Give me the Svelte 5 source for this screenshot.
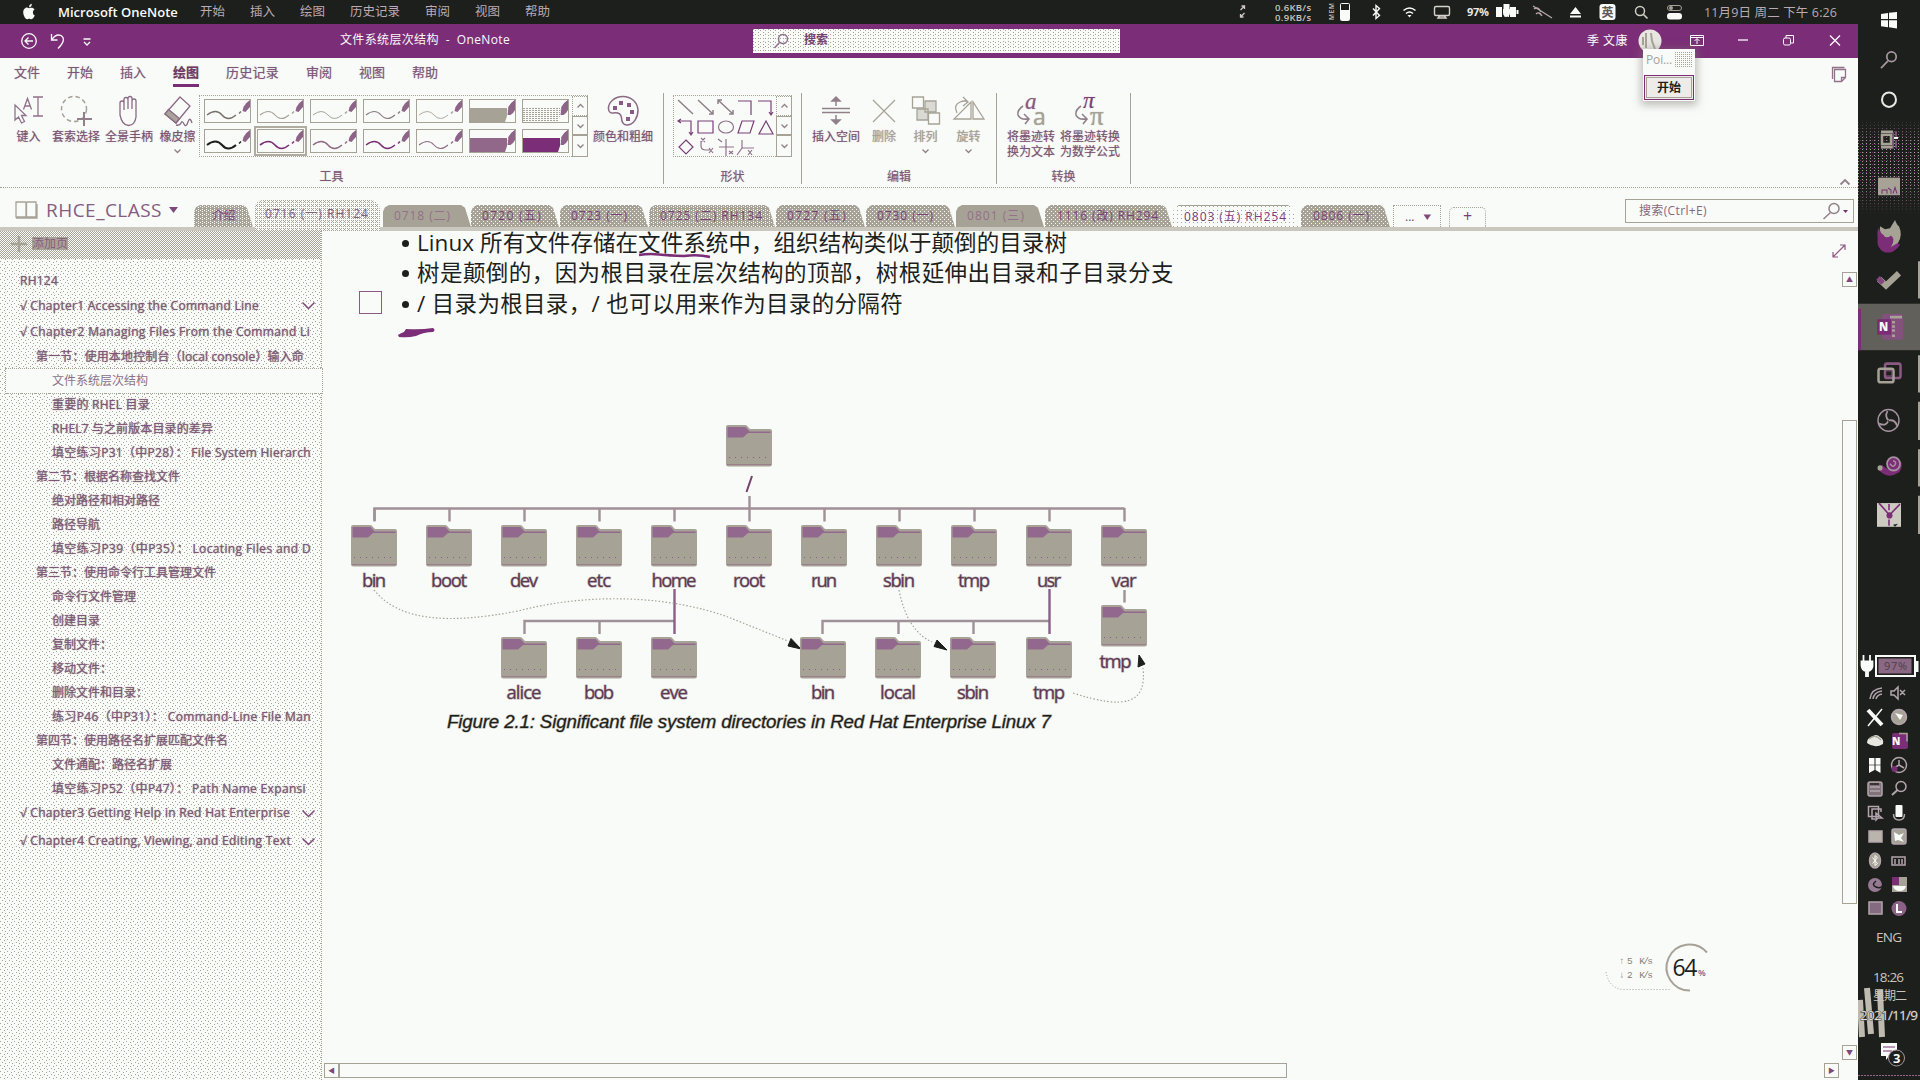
<script>
  // Spreads a label's letter spacing so that it fills the given width.
  function fit(node, width) {
    const natural = node.getBoundingClientRect().width;
    const count = [...node.textContent].length;
    if (count && width) node.style.letterSpacing = (width - natural) / count + 'px';
  }

  const menus = [['开始', 25], ['插入', 25], ['绘图', 25], ['历史记录', 50], ['审阅', 25], ['视图', 25], ['帮助', 25]];
  const ribbonTabs = [['文件', 26], ['开始', 26], ['插入', 26], ['绘图', 26], ['历史记录', 53], ['审阅', 26], ['视图', 26], ['帮助', 26]];

  const sections = [
    { t: '介绍', w: 59, tw: 23, pad: 18, gap: 0, k: 'mid' },
    { t: '0716 (一) RH124', w: 125, tw: 104, pad: 10, gap: 2, k: 'active' },
    { t: '0718 (二)', w: 88, tw: 57, pad: 11, gap: 3, k: 'solid' },
    { t: '0720 (五)', w: 88, tw: 60, pad: 11, gap: 0, k: 'dense' },
    { t: '0723 (一)', w: 88, tw: 57, pad: 11, gap: 1, k: 'dense' },
    { t: '0725 (二) RH134', w: 126, tw: 103, pad: 11, gap: 1, k: 'mid' },
    { t: '0727 (五)', w: 89, tw: 60, pad: 11, gap: 1, k: 'dense' },
    { t: '0730 (一)', w: 89, tw: 57, pad: 11, gap: 1, k: 'dense' },
    { t: '0801 (三)', w: 88, tw: 58, pad: 11, gap: 1, k: 'solid' },
    { t: '1116 (改) RH294', w: 127, tw: 102, pad: 12, gap: 1, k: 'dense' },
    { t: '0803 (五) RH254', w: 125, tw: 103, pad: 11, gap: 1, k: 'pale' },
    { t: '0806 (一)', w: 89, tw: 57, pad: 12, gap: 3, k: 'dense' }
  ];

  const pages = [
    { t: 'RH124', l: 0, w: 38, h: 22 },
    { t: '√ Chapter1 Accessing the Command Line', l: 0, w: 239, h: 27, c: true },
    { t: '√ Chapter2 Managing Files From the Command Li', l: 0, w: 290, h: 26 },
    { t: '第一节：使用本地控制台（local console）输入命', l: 1, w: 268 },
    { t: '文件系统层次结构', l: 2, w: 96, sel: true },
    { t: '重要的 RHEL 目录', l: 2, w: 98 },
    { t: 'RHEL7 与之前版本目录的差异', l: 2, w: 161 },
    { t: '填空练习P31（中P28）： File System Hierarch', l: 2, w: 259 },
    { t: '第二节：根据名称查找文件', l: 1, w: 144 },
    { t: '绝对路径和相对路径', l: 2, w: 108 },
    { t: '路径导航', l: 2, w: 48 },
    { t: '填空练习P39（中P35）： Locating Files and D', l: 2, w: 259 },
    { t: '第三节：使用命令行工具管理文件', l: 1, w: 180 },
    { t: '命令行文件管理', l: 2, w: 84 },
    { t: '创建目录', l: 2, w: 48 },
    { t: '复制文件：', l: 2, w: 60 },
    { t: '移动文件：', l: 2, w: 60 },
    { t: '删除文件和目录：', l: 2, w: 96 },
    { t: '练习P46（中P31）： Command-Line File Man', l: 2, w: 259 },
    { t: '第四节：使用路径名扩展匹配文件名', l: 1, w: 192 },
    { t: '文件通配：路径名扩展', l: 2, w: 120 },
    { t: '填空练习P52（中P47）： Path Name Expansi', l: 2, w: 254 },
    { t: '√ Chapter3 Getting Help in Red Hat Enterprise', l: 0, w: 270, h: 24, c: true },
    { t: '√ Chapter4 Creating, Viewing, and Editing Text', l: 0, w: 271, h: 32, c: true }
  ];

  const folders = [
    [726, 425, ''],
    [351, 525, 'bin', 24], [426, 525, 'boot', 36], [501, 525, 'dev', 28], [576, 525, 'etc', 24],
    [651, 525, 'home', 45], [726, 525, 'root', 32], [801, 525, 'run', 26], [876, 525, 'sbin', 32],
    [951, 525, 'tmp', 32], [1026, 525, 'usr', 24], [1101, 525, 'var', 25],
    [501, 637, 'alice', 35], [576, 637, 'bob', 30], [651, 637, 'eve', 28],
    [800, 637, 'bin', 24], [875, 637, 'local', 36], [950, 637, 'sbin', 32], [1026, 637, 'tmp', 32],
    [1101, 605, 'tmp', 32]
  ];
  const row = [374.5, 449.5, 524.5, 599.5, 674.5, 824.5, 899.5, 974.5, 1049.5, 1124.5];

  const pens = [
    ['#777068', 1.3], ['#a7a296', 1.1], ['#a7a296', 1], ['#8c7a85', 1.1], ['#a7a296', 0.9], ['fill', '#a7a296'], ['dots', '#a7a296'],
    ['#1c1f1b', 2], ['#7b2e77', 1.6, true], ['#91677f', 1.3], ['#7b2e77', 1.4], ['#8f6f84', 1.1], ['fill', '#91688a'], ['fill', '#7b2e77']
  ];
</script>

{#snippet chev(dir)}
  <svg class="chev" width="9" height="6" viewBox="0 0 9 6"><path d={dir === 'up' ? 'M1.5 4.5l3-3 3 3' : 'M1.5 1.5l3 3 3-3'} fill="none" stroke="#91808a" stroke-width="1.3" /></svg>
{/snippet}

<div class="screen">
  <div class="desk">
    <div class="macbar">
      <svg class="apple" width="14" height="18" viewBox="0 0 14 18"><path d="M9.8.8C8 1.200 7 2.500 7.100 4.300 8.800 4.200 9.900 2.800 9.800.8zM7 5.200C5.800 4.700 4.700 4.300 3.500 4.900 1.300 6 .9 8.500 1.400 11c.5 2.500 2 5.200 3.700 5.300.8 0 1.200-.5 2.100-.5s1.300.5 2.200.5c1.500-.1 2.900-2.300 3.400-4-2.500-1.100-2.400-4.700-.2-5.900C11.500 4.800 9.400 4.200 7 5.200z" fill="#f9fbf9" /></svg>
      <b class="app" use:fit={118}>Microsoft OneNote</b>
      {#each menus as [t, w]}<span class="menu"><i use:fit={w}>{t}</i></span>{/each}
      <svg class="status" width="618" height="24" viewBox="1230 0 618 24" fill="none" stroke="#f9fbf9">
        <path d="M1240.500 10l4-4m-3 0h3v3M1244.500 13l-4 4m0-3v3h3" stroke="#d0c6cc" stroke-width="1.300" />
        <g fill="#c9c6bd" stroke="none" font-size="9.500" font-weight="600">
          <text x="1275" y="11" textLength="36">0.6KB/s</text>
          <text x="1275" y="21" textLength="36">0.9KB/s</text>
          <text transform="translate(1333.500 20) rotate(-90)" font-size="6.500" textLength="17">MEM</text>
        </g>
        <rect x="1340.500" y="3.500" width="9" height="17" rx="1" /><rect x="1341" y="10" width="8" height="10" fill="#f9fbf9" stroke="none" />
        <path d="M1373 8.500l6.500 7-3.500 3v-13l3.500 3-6.500 7" stroke-width="1.400" />
        <path d="M1403.500 10.500q6-5 12 0M1406 13.500q3.500-3 7 0" stroke-width="1.600" /><path d="M1407.500 15h4l-2 2.500z" fill="#f9fbf9" stroke="none" />
        <path d="M1436 15.500q-1.500 0-1.500-1.500V8q0-1.500 1.500-1.500h12q1.500 0 1.500 1.500v6q0 1.500-1.500 1.500zM1438 18h8l-1.500-2h-5z" stroke="#d5d2ca" stroke-width="1.400" />
        <text x="1467" y="16" fill="#e8e8e4" stroke="none" font-size="11" font-weight="700" textLength="22">97%</text>
        <path d="M1496 7h6v10h-6zM1510 7h6v10h-6zM1516.500 10h2v4h-2zM1503.500 4v5h6V4M1503 9h7v4q0 3-3.500 4-3.500-1-3.500-4z" fill="#f9fbf9" stroke="none" />
        <path d="M1505 5v12M1508.500 5v12" />
        <path d="M1533 6l19 12M1534 9q4-3 7 3M1536 14q3-3 6 2" stroke="#b6a5a9" stroke-width="1.400" />
        <path d="M1575.500 7l5.500 7h-11zM1570 15.500h11v2h-11z" fill="#f9fbf9" stroke="none" />
        <rect x="1599.500" y="4" width="16" height="16" rx="3" fill="#f9fbf9" stroke="none" /><text x="1601.500" y="16.500" font-size="12" font-weight="700" fill="#5f5a54" stroke="none">英</text>
        <circle cx="1640" cy="11" r="4.500" stroke="#d0cdc4" stroke-width="1.500" /><path d="M1643.500 14.500l4 4" stroke="#d0cdc4" stroke-width="1.700" />
        <rect x="1667.500" y="5.500" width="14" height="5" rx="2.500" stroke="#a7a296" /><rect x="1667" y="13" width="15" height="6.500" rx="3" fill="#f9fbf9" stroke="none" /><circle cx="1671" cy="8" r="2" fill="#a7a296" stroke="none" />
        <text x="1704" y="16.500" font-size="12.500" fill="#b9aab1" stroke="none" textLength="133">11月9日 周二 下午 6:26</text>
      </svg>
    </div>

    <div class="titlebar">
      <svg width="75" height="24" viewBox="20 29 75 24" fill="none" stroke="#f9fbf9" stroke-width="1.300"><circle cx="29" cy="41" r="7.300" /><path d="M33 41h-8m3.500-3.500L25 41l3.500 3.500M51.500 34v6h6M52 39.500q4-6 9-4 6 4-3 13M83.500 39h7" /><path d="M84 42l3 3 3-3" /></svg>
      <div class="doc"><i use:fit={170}>文件系统层次结构&nbsp; - &nbsp;OneNote</i></div>
      <div class="find">
        <svg width="16" height="16" viewBox="0 0 16 16" fill="none" stroke="#91728a" stroke-width="1.500"><circle cx="10" cy="6" r="4.500" /><path d="M6.500 9.500L1.500 15" /></svg>
        <i use:fit={24}>搜索</i>
      </div>
      <div class="user"><i use:fit={41}>季 文康</i></div>
      <svg class="win" width="205" height="24" viewBox="1637 29 205 24" fill="none" stroke="#f9fbf9"><circle cx="1650" cy="41" r="11.500" fill="#e7e6e1" stroke="none" /><path d="M1646 33v15M1651 33l1 8 3 8M1643 37v8" stroke="#a7a296" stroke-width="2" /><path d="M1690.500 35.500h13v10h-13zM1690.500 37.500h13M1697 44v-5m-2.500 2l2.500-2.500 2.500 2.500" /><path d="M1738 40h10" stroke-width="1.300" /><rect x="1783.500" y="38" width="7" height="7" rx="1.500" /><path d="M1786 38v-2.500h7.500V43h-3" /><path d="M1830 35.500l10 10M1840 35.500l-10 10" stroke-width="1.300" /></svg>
    </div>

    <div class="ribbon">
      <div class="rtabs">
        {#each ribbonTabs as [t, w], n}<span class:on={n === 3}><i use:fit={w}>{t}</i></span>{/each}
        <svg class="note" width="18" height="19" viewBox="0 0 18 19" fill="none" stroke="#91728a" stroke-width="1.300"><path d="M2.500 14V2.500h12M4.500 4.500h11v8l-4 4h-7zM11.500 16v-3.500h4" /></svg>
      </div>
      <div class="groups">
        <section class="g1">
          <div class="tools">
            <div class="tool w43"><svg width="32" height="32" viewBox="0 0 32 32" fill="none" stroke="#91728a" stroke-width="1.300"><path d="M2 10v15l3.500-3 3 6 3-1.500-3-6H13zM10.500 14.500l4-11 4 11M12 11h5M20 2h10M25 2v19M20 21h10" /></svg><i use:fit={24}>键入</i></div>
            <div class="tool w52"><svg width="32" height="32" viewBox="0 0 32 32" fill="none" stroke="#a7a296" stroke-width="1.500"><circle cx="14" cy="14" r="12.500" stroke-dasharray="4.500 3" /><path d="M24 17v14M17 24h15" stroke="#91808a" stroke-width="2" /></svg><i use:fit={48}>套索选择</i></div>
            <div class="tool w54"><svg width="32" height="32" viewBox="0 0 32 32" fill="none" stroke="#8b6a84" stroke-width="1.300"><path d="M7 18V8q0-2 2-2t2 2v7V4.500q0-2 2-2t2 2V14 3.500q0-2 2-2t2 2V14 6q0-2 2-2t2 2v16q-1 8-7.500 8.500Q9 30 7 20z" /></svg><i use:fit={48}>全景手柄</i></div>
            <div class="tool w42"><svg width="32" height="32" viewBox="0 0 32 32" fill="none" stroke="#8b6a84" stroke-width="1.300"><path d="M18 2l10 9-14 17L3 19z" /><path d="M3 19l11 9 3.500-4.500L6.500 14.500z" fill="#aaa39a" /><path d="M14 30q4 1 5-2t3 1 4-2 4 1" /></svg><i use:fit={36}>橡皮擦</i>{@render chev('down')}</div>
            <div class="gallery">
              <div class="pens">
                {#each pens as p}
                  <svg class:picked={p[2] === true} width="47" height="24" viewBox="0 0 47 24">
                    <rect x=".5" y=".5" width="46" height="23" fill="#f9fbf9" stroke="#a7a296" />
                    {#if p[0] === 'fill'}<rect x="1" y="9" width="37" height="14" fill={p[1]} />{:else if p[0] === 'dots'}<path d="M1 9.500h37M1 11.500h37M1 13.500h37M1 15.500h37M1 17.500h37M1 19.500h37M1 21.500h37" stroke={p[1]} stroke-dasharray="2 1" />{:else}<path d="M3 16q9-7 15 0t14 0" fill="none" stroke={p[0]} stroke-width={p[1]} /><path d="M35 14.500l2-2" stroke={p[0]} stroke-width="1.500" />{/if}
                    <path d="M38.500 12l1-4q3-5 6.500-7v7q-2 2-4.500 5z" fill="#8d6488" />
                    {#if p[0] === 'fill' || p[0] === 'dots'}<path d="M38 17l1-8 5 3v4l-3 1v6h-5z" fill="#f9fbf9" /><path d="M38.500 16l1-8q3-5 6.500-7v10q-2 4-4.500 5z" fill="#8d6488" />{/if}
                  </svg>
                {/each}
              </div>
              <div class="scroll"><span>{@render chev('up')}</span><span>{@render chev('down')}</span><span>{@render chev('down')}</span></div>
            </div>
            <div class="tool w70"><svg width="32" height="32" viewBox="0 0 32 32" fill="none" stroke="#8b6a84" stroke-width="1.500"><path d="M16 1.500C7 1.500 1 8 1.500 14q.5 4.500 5 4 7-1 8 4.500 0 7 5 7.500C27 30 31 22 31 15 30.500 7 24 1.500 16 1.500z" /><g fill="#8b5a84" stroke="none"><rect x="6" y="11" width="4" height="4" /><rect x="12" y="6" width="4" height="4" /><rect x="20" y="8" width="4" height="4" /><rect x="23" y="15" width="4" height="4" /><rect x="19" y="22" width="4" height="4" /></g></svg><i use:fit={60}>颜色和粗细</i></div>
          </div>
          <footer>工具</footer>
        </section>

        <section class="g2">
          <div class="tools">
            <div class="gallery shapes">
              <svg width="102" height="61" viewBox="0 0 102 61" fill="none" stroke="#7b3f77" stroke-width="1.200">
                <g stroke="#91808a" stroke-width="1.500"><path d="M4 4l15 14M24 4l15 14m0-4v4h-4M44 4l15 14m0-4v4h-4M44 8V4h4" /></g>
                <path d="M64 5h13v14M84 5h13v14m-2-3l2 3 2-3M5 25h12v14m-2-3l2 3 2-3M7 23l-3 2 3 2M24 25h15v12H24z" />
                <ellipse cx="52" cy="31" rx="7.500" ry="6" stroke="#91728a" /><path d="M68 25h12l-4 12H64zM92 25l7 13H85zM12 44l7 7-7 7-7-7z" />
                <path d="M27 45v5q0 4 5 4h6M27 42l4 4M31 42l-4 4M35 52l4 5M39 52l-4 5M52 43v17M45 51h15M44 43l4 3M55 55l4 3M59 55l-4 3M68 44v8l-5 7M68 52h12M74 54l4 5M78 54l-4 5" stroke="#91728a" />
              </svg>
              <div class="scroll"><span>{@render chev('up')}</span><span>{@render chev('down')}</span><span>{@render chev('down')}</span></div>
            </div>
          </div>
          <footer>形状</footer>
        </section>

        <section class="g3">
          <div class="tools">
            <div class="tool w68"><svg width="32" height="32" viewBox="0 0 32 32" fill="none" stroke="#91808a" stroke-width="1.500"><path d="M2 13.500h28M2 17.500h28M16 3v8M16 20v8" /><path d="M12 6l4-4 4 4zM12 25l4 4 4-4z" fill="#91808a" /></svg><i use:fit={48}>插入空间</i></div>
            <div class="tool w28 off"><svg width="28" height="32" viewBox="0 0 28 32" fill="none" stroke="#a7a296" stroke-width="1.200"><path d="M3 5l22 22M25 5L3 27" /></svg><i use:fit={24}>删除</i></div>
            <div class="tool w55 off"><svg width="32" height="32" viewBox="0 0 32 32" fill="#dbd9d3" stroke="#a7a296" stroke-width="1.300"><path d="M15 6h11v11H15zM7 14h11v11H7z" /><path d="M2.500 2h11v11h-11zM18.500 18h11v11h-11z" fill="#f9fbf9" /></svg><i use:fit={24}>排列</i>{@render chev('down')}</div>
            <div class="tool w31 off"><svg width="32" height="32" viewBox="0 0 32 32" fill="none" stroke="#a7a296" stroke-width="1.300"><path d="M1 24h17V7zM20 24h11L20 7zM4 18q-4-8 3-11 5-2 8 0m-5-5l5 5-5 4" /></svg><i use:fit={24}>旋转</i>{@render chev('down')}</div>
          </div>
          <footer>编辑</footer>
        </section>

        <section class="g4">
          <div class="tools">
            <div class="tool w62"><svg class="serif" width="32" height="32" viewBox="0 0 32 32" fill="none" stroke="#91808a" stroke-width="1.600"><path d="M8 11q-6 4-5 9 2 5 10 4m-4-5l5 5-4 5" /><text x="10" y="13.500" font-size="23" fill="#8b5a84" stroke="none" font-style="italic">a</text><text x="18" y="30" font-size="23" fill="#a7a296" stroke="none" font-family="Open Sans">a</text></svg><i use:fit={48}>将墨迹转</i><i use:fit={48}>换为文本</i></div>
            <div class="tool w56"><svg class="serif" width="32" height="32" viewBox="0 0 32 32" fill="none" stroke="#91808a" stroke-width="1.600"><path d="M7 11q-6 4-5 9 2 5 10 4m-4-5l5 5-4 5" /><text x="9" y="13" font-size="23" fill="#7b3f77" stroke="none" font-style="italic">π</text><text x="16" y="30" font-size="27" fill="#a7a296" stroke="none">π</text></svg><i use:fit={60}>将墨迹转换</i><i use:fit={60}>为数学公式</i></div>
          </div>
          <footer>转换</footer>
        </section>
        <svg class="fold" width="12" height="8" viewBox="0 0 12 8" fill="none" stroke="#91808a" stroke-width="1.800"><path d="M1.500 6.500l4.500-4.500 4.500 4.500" /></svg>
      </div>
    </div>

    <div class="strip">
      <div class="book">
        <svg width="24" height="20" viewBox="0 0 24 20" fill="none" stroke="#a7a296" stroke-width="1.300"><path d="M1 2h10v15H1zM12 2h9v15h-9M1 18h21V4M11.500 2v15" /></svg>
        <i use:fit={116}>RHCE_CLASS</i>
        <svg width="10" height="8" viewBox="0 0 10 8"><path d="M0 1h9L4.500 7z" fill="#7f4a79" /></svg>
      </div>
      {#each sections as s}
        <div class="sec {s.k}" style:width="{s.w}px" style:margin-left="{s.gap}px" style:padding-left="{s.pad}px"><i use:fit={s.tw}>{s.t}</i></div>
      {/each}
      <div class="sec more"><span>...</span><svg width="9" height="6" viewBox="0 0 9 6"><path d="M.5.500h7.500L4.300 6z" fill="#7f4a79" /></svg></div>
      <div class="sec plus">+</div>
      <div class="lookup"><i use:fit={68}>搜索(Ctrl+E)</i>
        <svg width="32" height="18" viewBox="0 0 32 18" fill="none" stroke="#91808a" stroke-width="1.500"><circle cx="13" cy="6.500" r="5" /><path d="M9.500 10.500L2.500 17" /><path d="M22 8h5l-2.500 3z" fill="#7b2e77" stroke="none" /></svg>
      </div>
    </div>

    <div class="work">
      <aside>
        <div class="add"><svg width="16" height="16" viewBox="0 0 16 16"><path d="M8 0v16M0 8h16" stroke="#a7a296" stroke-width="2.500" /></svg><i use:fit={36}>添加页</i></div>
        <div class="pages">
          {#each pages as p}
            <div class="page l{p.l}" class:sel={p.sel} style:height="{p.h ?? 24}px"><i use:fit={p.w}>{p.t}</i>
              {#if p.c}<svg width="15" height="9" viewBox="0 0 15 9"><path d="M1.500 1.500l6 6 6-6" fill="none" stroke="#7f4a79" stroke-width="1.500" /></svg>{/if}
            </div>
          {/each}
        </div>
      </aside>

      <main>
        <div class="paper">
          <div class="lines">
            <p><i use:fit={650}>Linux 所有文件存储在文件系统中，组织结构类似于颠倒的目录树</i></p>
            <p><i use:fit={757}>树是颠倒的，因为根目录在层次结构的顶部，树根延伸出目录和子目录分支</i></p>
            <p class="todo"><i use:fit={486}>/ 目录为根目录，/ 也可以用来作为目录的分隔符</i></p>
          </div>
          <svg class="canvas" width="1536" height="829" viewBox="322 231 1536 829">
            <path d="M639 255q10-1.500 20-.5t25 1.500q14-2 26 1" fill="none" stroke="#7b2e77" stroke-width="2.500" />
            <path d="M398 335q3-2 6-3l2-3q14 1 27-1 3 2 0 4-9 0-17 4-8 2-17 1z" fill="#7b2e77" />
            <g fill="none" stroke="#a09097" stroke-width="2.400">
              <path d="M374.500 521v-12.500h750" />
              {#each row as x}<path d="M{x} 508v13.500" />{/each}
              <path d="M749.500 496v25.500M524.500 634v-13h150M599.500 621v13M822.500 634v-13h227M898.500 621v13M973.500 621v13M1124.500 590v12.500" />
              <path d="M674.500 589v45M1049.500 589v45" stroke="#8c5f88" />
              <path d="M752 476l-5.500 16" stroke="#74436f" stroke-width="2" />
            </g>
            <g fill="none" stroke="#a7a296" stroke-width="1.200" stroke-dasharray="1.500 2">
              <path d="M374 590C400 622 450 624 518 611 590 592 670 596 728 617L788 641" />
              <path d="M899 590C904 615 914 634 932 642" />
              <path d="M1073 693C1125 710 1147 704 1143 668" />
            </g>
            <path d="M791 638.500l10 10.500-13-3zM937 640l10 10-13-3.500zM1139 655l6 9-7 3z" fill="#1c1f1b" stroke="#1c1f1b" />
            {#each folders as [x, y, name, w]}
              <g transform="translate({x} {y})">
                <path d="M0 8V2q0-2 2-2h17q2 0 3 2l2 2h20q2 0 2 2v33q0 2.500-2.500 2.500H2.500Q0 41.500 0 39z" fill="#a7a296" />
                <path d="M1.500 2h18l4 4.500h21v1.500H22l-5 4.500H1.500z" fill="#93688e" />
                <path d="M1.500 39.500h43" stroke="#8c5a86" stroke-dasharray="1 1" /><path d="M3 32.500h41" stroke="#8c5a86" stroke-dasharray="1 5" />
              </g>
              {#if name}<text class="dir" x={x + 23 - w / 2 - (y === 605 ? 8.500 : 0)} y={y + (y === 605 ? 63 : 62)} textLength={w}>{name}</text>{/if}
            {/each}
            <text class="caption" x="447" y="728" textLength="604">Figure 2.1: Significant file system directories in Red Hat Enterprise Linux 7</text>
            <g class="net">
              <path d="M1707 952.500A23 23 0 1 0 1690 990.500" fill="none" stroke="#a7a296" stroke-width="2" />
              <path d="M1606 972q3 17 18 17.500h46" fill="none" stroke="#a7a296" stroke-dasharray="1 2" />
              <text x="1672.500" y="976" font-size="23" fill="#1c1f1b" textLength="25">64</text><text x="1698" y="976" font-size="9" font-weight="600" fill="#8b5a84" textLength="8">%</text>
              <text class="mono" x="1619" y="964" textLength="34">↑ 5&nbsp; K/s</text><text class="mono" x="1619" y="978" textLength="34">↓ 2&nbsp; K/s</text>
            </g>
            <path d="M1833 257l12-12m-5 0h5v5M1838 257h-5v-5" fill="none" stroke="#8b5a84" stroke-width="1.200" />
          </svg>
          <div class="vbar"><b>▲</b><span></span><b>▼</b></div>
        </div>
        <div class="hbar"><b>◀</b><span></span><b>▶</b></div>
      </main>
    </div>

    <div class="pop"><div class="phead"><i use:fit={26}>Poi...</i><em></em></div><div class="pbtn">开始</div></div>
  </div>

  <div class="dock">
    <div class="glow"></div>
    <svg width="62" height="1080" viewBox="1858 0 62 1080" fill="none">
      <g transform="scale(1 1.033)">
        <path d="M1881 13.500l7-1v6h-7zM1889 12.300l8-.8v7h-8zM1881 19.500h7v7l-7-1zM1889 19.500h8v8l-8-1z" fill="#f9fbf9" />
        <g stroke="#a998a2" stroke-width="1.700"><circle cx="1891.500" cy="55" r="4.700" /><path d="M1888 59l-7 7" /></g>
        <circle cx="1889" cy="96.500" r="7" stroke="#e9e8e3" stroke-width="2" />
        <path d="M1881 127.500h12M1881 142.500h12M1882 130.500h9v9h-9z" stroke="#a7a296" stroke-width="2.500" /><path d="M1893 128v15M1896 127v5M1896 136v7" stroke="#8c6a88" stroke-width="1.500" /><path d="M1894 133.500h4" stroke="#f9fbf9" stroke-width="2" />
        <rect x="1878" y="172" width="22" height="17" fill="#a7a296" /><path d="M1882 187.500v-3.500h5v3.500M1888 182l3 2v3.500M1893 187.500l2-6 2 6" stroke="#7b2e77" />
        <path d="M1878 221q-2 10 2 17 6 6 12 5 7-2 8-7-6 2-9-1 5-2 2-10-6 6-10 1-3-2-5-5z" fill="#7b2e77" /><circle cx="1888" cy="234" r="10.500" fill="#7b2e77" />
        <path d="M1880 219l5 3 5-1 5-8q2 5 4 6 4 9-1 16l-7 4q5-7 0-11-5 4-8-1-4-2-3-8z" fill="#a7a296" />
        <path d="M1879 270l7 6.500 13-12" stroke="#a7a296" stroke-width="6" /><path d="M1878 269l5 5" stroke="#83457d" stroke-width="5" />
        <rect x="1858" y="294" width="62" height="45" fill="#62605a" /><path d="M1859.500 299v40" stroke="#7b2e77" stroke-width="3" />
        <rect x="1882" y="304" width="21" height="25" rx="2" fill="#84507e" /><path d="M1890 307h12M1892 312h3M1892 316h3M1892 320h3M1892 325h3" stroke="#a7a296" stroke-width="2.500" /><rect x="1877" y="309" width="14" height="15" fill="#7b2e77" />
        <text x="1879" y="320.500" font-size="11" font-weight="800" fill="#f9fbf9">N</text>
        <rect x="1885" y="352" width="15.500" height="14" rx="2" stroke="#8b5a84" stroke-width="2.500" /><rect x="1878.500" y="357" width="15" height="13" rx="2" stroke="#a7a296" stroke-width="2.500" /><rect x="1885" y="359" width="7" height="5" stroke="#8b5a84" />
        <g stroke="#a7929f" stroke-width="1.400"><circle cx="1888.500" cy="407" r="10.500" /><path d="M1888.500 407q-4-4-1-9M1889 407q6-1 8 5M1888 408q-2 5-9 2" stroke-width="1.800" /></g>
        <path d="M1880 452q8 9 17 3 5-8-4-9" stroke="#7b2e77" stroke-width="6" /><circle cx="1893.500" cy="449" r="6.500" stroke="#a7929f" stroke-width="1.800" fill="#7b2e77" /><path d="M1893 446q4 1 2 4t-5-1" stroke="#a7929f" stroke-width="1.500" /><circle cx="1880" cy="453" r="2.500" fill="#a7a296" />
        <rect x="1877" y="487" width="24" height="23" fill="#cdcac2" /><path d="M1879 487l10 11M1889 488v6M1889 503v6M1889 499l11-11" stroke="#7b2e77" stroke-width="1.600" /><circle cx="1889.500" cy="499" r="3" fill="#7b2e77" /><path d="M1893 508l5-1-3 3z" fill="#1c1f1b" />
        <path d="M1919 253v36M1919 344v36M1919 389v37M1919 435v36M1919 480v37" stroke="#a7a296" stroke-width="2" />
      </g>
      <path d="M1863.500 655v6M1870 655v6M1861.500 661.500h11v5q-1 4-4.500 4.500v5h-2v-5q-4-.5-4.500-5.500z" stroke="#f9fbf9" stroke-width="1.800" fill="#f9fbf9" />
      <rect x="1876" y="656" width="39" height="20" stroke="#f9fbf9" stroke-width="2" /><rect x="1878.500" y="658.500" width="33" height="15" fill="#8b6884" /><path d="M1917 661v11" stroke="#f9fbf9" stroke-width="3" />
      <text x="1884" y="670" font-size="11" fill="#4a4046" textLength="23">97%</text>
      <g stroke="#b3a5ad" stroke-width="1.500">
        <path d="M1870 699q1-10 12-11M1873 699q1-7 9-8M1876 699q1-4 6-5" /><path d="M1891 691h3l4-4v12l-4-4h-3zM1900 690l5 5M1905 690l-5 5" />
        <path d="M1868 710l14 15" stroke="#f9fbf9" stroke-width="4" /><path d="M1882 709l-14 17" stroke="#f9fbf9" />
        <circle cx="1899" cy="717" r="7.500" fill="#a7a296" /><path d="M1895 713l8 2-3 5z" fill="#f9fbf9" stroke="none" />
        <path d="M1867 743q0-5 5-6 4-4 8 0 4 2 3 7-8 5-16-1z" fill="#e8e7e1" stroke="none" /><path d="M1869 739q6-6 12 1" stroke="#a7a296" />
        <rect x="1892" y="733" width="16" height="16" rx="2" fill="#7b2e77" stroke="none" /><path d="M1899 733.500h8v8" stroke="#a7a296" /><text x="1892" y="745" fill="#f9fbf9" stroke="none" font-size="10" font-weight="800">N</text>
        <path d="M1869 758h5.500v12l-5.500 3zM1875.500 758h5v15l-5-3z" fill="#f9fbf9" stroke="none" /><path d="M1869 765h12" stroke="#1c1f1b" stroke-width=".6" /><circle cx="1899" cy="765" r="7.500" /><path d="M1899 765v-5M1899 765l5 3M1899 765l-5 3" /><circle cx="1894.500" cy="769" r="3" fill="#7b2e77" stroke="none" />
        <rect x="1868" y="782" width="14" height="14" rx="2" fill="#80737a" /><path d="M1870 784h9" stroke="#1c1f1b" /><path d="M1870 787h10M1870 791h10" /><circle cx="1901" cy="786.500" r="5" /><path d="M1897.500 790l-5.500 5" stroke-width="2" />
        <rect x="1868.500" y="806.500" width="10" height="10" /><path d="M1881 812v-3h-9v10h3M1876 813v7l2-2h4z" /><rect x="1895.500" y="805" width="7" height="12" rx="1" fill="#f9fbf9" stroke="none" /><path d="M1893.500 814q0 6 5.500 6t5.500-6" />
        <rect x="1869" y="831" width="13" height="11" fill="#b9b5ac" /><rect x="1892" y="829" width="14" height="15" rx="2" fill="#a7a296" /><path d="M1894 832l5 3 5-2-3 5 3 4-6-2-3 1z" fill="#f9fbf9" stroke="none" />
        <ellipse cx="1875" cy="860.500" rx="5.500" ry="7.500" fill="#a7a296" /><path d="M1872.500 857.500l5 6-2.500 2v-10l2.500 2-5 6" stroke="#f9fbf9" stroke-width="1" /><path d="M1892 857h13v8h-13zM1895 859v5M1899 859v5M1902 859v5" />
        <circle cx="1875" cy="885" r="7" fill="#967992" stroke="none" /><path d="M1876 881q-5 4 0 6t7-2" stroke="#1c1f1b" /><rect x="1892" y="877" width="15" height="15" fill="#a7a296" stroke="none" /><path d="M1899 877v8h-7v-8z" fill="#7b2e77" stroke="none" /><path d="M1893 886h13q-1 5-6.500 5t-6.500-5z" fill="#f9fbf9" stroke="none" />
        <rect x="1869" y="902" width="13" height="12" fill="#856b81" /><circle cx="1899" cy="908.500" r="7.500" fill="#8b6286" stroke="none" /><path d="M1897 904v8h5" stroke="#f9fbf9" stroke-width="2" />
      </g>
      <g fill="#c9c6bd" font-size="13.500">
        <text x="1876" y="942" textLength="26">ENG</text><text x="1873" y="982" textLength="31">18:26</text>
        <g stroke="#bfbbb1" stroke-width="6"><path d="M1860 1000l2 37M1867 988l4 46M1880 990l2 47" /></g>
        <text x="1873" y="1000" font-size="12" textLength="34">星期二</text><text class="date" x="1860" y="1019.500" textLength="58">2021/11/9</text>
      </g>
      <path d="M1881 1043h16v13h-8l-3 4v-4h-5z" fill="#f9fbf9" /><path d="M1883 1047h12M1883 1051h9" stroke="#7b2e77" /><circle cx="1896.500" cy="1058" r="8" fill="#1c1f1b" stroke="#a998a2" /><text x="1893" y="1063" font-size="13" font-weight="700" fill="#f9fbf9">3</text>
      <path d="M1858 1075.500h62" stroke="#94688e" stroke-dasharray="2 1" />
    </svg>
  </div>
</div>

<style>
  :global(body) { background: #f9fbf9; overflow: hidden; }
  .screen {
    --ink: #7b2e77; --gray: #a7a296; --paper: #f9fbf9; --night: #1c1f1b;
    --dot: conic-gradient(from 270deg at 1px 1px, #a7a296 90deg, transparent 0);
    --hole: conic-gradient(from 270deg at 1px 1px, #f9fbf9 90deg, transparent 0);
    display: flex; width: 1920px; height: 1080px; overflow: hidden; background: var(--paper);
    font: 12px/16px "Open Sans", "Noto Sans CJK SC", sans-serif; color: #80557b;
  }
  i { font-style: normal; display: inline-block; white-space: pre; flex: none; }
  svg { flex: none; display: block; }
  .desk { position: relative; width: 1858px; display: flex; flex-direction: column; flex: none; }
  .macbar { height: 24px; background: var(--night); display: flex; align-items: center; padding-left: 22px; box-sizing: border-box; color: #bcaab5; }
  .app { color: #f9fbf9; font-weight: 600; font-size: 13px; margin: 0 24px 0 22px; width: 118px; white-space: nowrap; display: inline-block; }
  .menu { margin-right: 25px; font-size: 12.5px; }
  .status { margin-left: auto; margin-right: 10px; }
  .titlebar { height: 34px; background: var(--ink); display: flex; align-items: center; padding-left: 20px; box-sizing: border-box; color: #f9fbf9; }
  .doc { margin-left: 245px; width: 413px; margin-top: -3px; }
  .find { width: 368px; height: 24px; display: flex; align-items: center; gap: 15px; padding-left: 20px; box-sizing: border-box; color: #73456e; background: var(--dot) 0 0 / 5px 3px, var(--dot) 2px 1px / 5px 4px, var(--paper); margin-right: 4px; width: 367px; }
  .find i { margin-top: -2px; font-weight: 600; }
  .user { margin-left: 463px; width: 50px; }
  .ribbon { height: 130px; border-bottom: 1px dotted var(--gray); box-sizing: border-box; }
  .rtabs { height: 33px; display: flex; gap: 27px; padding-left: 14px; font-size: 13px; align-items: flex-start; text-shadow: 0 0 1px #a7a296; }
  .rtabs span { height: 26px; line-height: 29px; border-bottom: 3px solid transparent; }
  .rtabs .on { border-color: var(--ink); color: #6f3a6a; font-weight: 700; }
  .note { margin: 7px 10px 0 auto; }
  .groups { display: flex; height: 96px; }
  section { display: flex; flex-direction: column; justify-content: space-between; border-right: 1px solid var(--gray); height: 91px; box-sizing: border-box; margin-top: 2px; }
  .g1 { width: 664px; } .g2 { width: 138px; } .g3 { width: 195px; } .g4 { width: 134px; }
  .tools { display: flex; height: 73px; text-shadow: 0 0 1px #a7a296; }
  .g1 .tools { padding-left: 7px; } .g2 .tools { padding-left: 9px; } .g4 .tools { padding-left: 3px; }
  footer { text-align: center; height: 18px; line-height: 21px; text-shadow: 0 0 1px #a7a296; }
  .tool { display: flex; flex-direction: column; align-items: center; padding-top: 2px; color: #7c5076; }
  .tool > i { margin-top: 1px; line-height: 15px; }
  .tool > svg:first-child { margin-bottom: 1px; overflow: visible; }
  .tool > i + i { margin-top: 0; }
  .tool .chev { margin-top: 4px; }
  .off { color: #a7a296; }
  .w43 { width: 43px; } .w52 { width: 52px; } .w54 { width: 54px; } .w42 { width: 43px; } .w70 { width: 70px; } .w68 { width: 68px; }
  .w28 { width: 28px; } .w55 { width: 55px; } .w31 { width: 31px; } .w62 { width: 62px; } .w56 { width: 56px; }
  .serif { font-family: "Liberation Serif", serif; }
  .gallery { display: flex; justify-content: space-between; width: 389px; height: 62px; margin-top: 2px; border: 1px dotted var(--gray); border-right: 0; box-sizing: border-box; }
  .shapes { width: 119px; }
  .pens { display: grid; grid-template-columns: repeat(7, 47px); gap: 6px; padding: 3px 0 0 4px; align-content: start; }
  .picked { outline: 2px solid #b0aca1; outline-offset: 1px; }
  .scroll { width: 15px; display: grid; grid-template-rows: 20px 19px 22px; border-right: 1px solid var(--gray); }
  .scroll span { border: 1px solid var(--gray); border-right: 0; display: grid; place-items: center; box-sizing: border-box; }
  .scroll span:first-child { border-style: dotted; }
  .fold { margin: 87px 7px 0 auto; }
  .strip { height: 43px; display: flex; align-items: flex-end; border-bottom: 4px solid #cac7bf; box-sizing: border-box; position: relative; }
  .book { width: 194px; padding-left: 15px; box-sizing: border-box; display: flex; align-items: center; height: 34px; font-size: 19px; gap: 7px; color: #865d81; }
  .sec { height: 22px; line-height: 22px; box-sizing: border-box; color: #7b3f77; flex: none; clip-path: polygon(0 100%, 0 30%, 2px 10%, 6px 0, calc(100% - 10px) 0, calc(100% - 6px) 12%, 100% 100%); background-color: #bbb7ad; }
  .sec i { margin-top: -1px; }
  .mid { background: var(--hole) 0 0 / 4px 2px, var(--hole) 2px 1px / 4px 4px, #a7a296; }
  .dense { background: var(--hole) 0 0 / 4px 4px, var(--hole) 2px 2px / 4px 4px, #a7a296; }
  .solid { background: #a7a296; color: #94708b; }
  .active { height: 31px; margin-bottom: -4px; line-height: 28px; color: #826278; background: var(--dot) 0 0 / 2px 2px, var(--dot) 1px 1px / 4px 4px, #f9fbf9; border-radius: 8px 10px 0 0; clip-path: none; }
  .pale { background: var(--dot) 0 0 / 4px 4px, #f9fbf9; border-top: 1px solid var(--gray); line-height: 21px; }
  .more { background: none; border: 1px dotted var(--gray); border-bottom: 0; width: 48px; margin-left: 3px; padding-left: 11px; display: flex; align-items: center; gap: 9px; clip-path: none; }
  .plus { background: none; border: 1px dotted var(--gray); border-bottom: 0; width: 37px; margin-left: 8px; border-radius: 5px 5px 0 0; text-align: center; font-size: 16px; clip-path: none; height: 20px; line-height: 17px; }
  .lookup { width: 229px; height: 24px; box-sizing: border-box; border: 1px solid var(--gray); margin: 0 4px 4px auto; display: flex; align-items: center; justify-content: space-between; padding: 0 0 1px 13px; color: #85687f; }
  .work { height: 849px; display: flex; }
  aside { width: 322px; box-sizing: border-box; border-right: 1px dotted var(--gray); display: flex; flex-direction: column; background: var(--dot) 0 0 / 7px 6px, var(--dot) 4px 1px / 7px 6px, var(--dot) 2px 3px / 7px 6px, var(--dot) 5px 4px / 7px 6px, var(--paper); }
  .add { height: 28px; display: flex; align-items: center; gap: 5px; padding: 0 0 3px 11px; box-sizing: border-box; background: var(--dot) 0 0 / 2px 2px, var(--dot) 1px 1px / 2px 2px, var(--paper); }
  .add i { background: var(--gray); line-height: 13px; color: #8b5a84; }
  .pages { padding-top: 11px; text-shadow: 0 0 1px #a7a296, 0 0 1px #a7a296; }
  .page { display: flex; align-items: center; justify-content: space-between; padding: 0 5px 0 20px; box-sizing: border-box; }
  .l1 { padding-left: 36px; } .l2 { padding-left: 52px; }
  .sel { background: var(--paper); margin-left: 6px; padding-left: 46px; margin-right: -1px; outline: 1px dotted var(--gray); color: #8d7087; text-shadow: none; }
  main { flex: 1; display: flex; flex-direction: column; }
  .paper { position: relative; height: 831px; display: flex; justify-content: flex-end; }
  .lines { position: absolute; left: 95px; top: -3px; color: #1c1f1b; font-size: 22.5px; font-family: "Open Sans", "Noto Sans CJK SC", sans-serif; }
  .lines p { margin: 0; height: 30.300px; line-height: 30.300px; position: relative; }
  .lines p::before { content: ''; position: absolute; left: -15px; top: 12px; width: 7px; height: 7px; border-radius: 50%; background: #1c1f1b; }
  .todo::after { content: ''; position: absolute; left: -58px; top: 2px; width: 21px; height: 21px; border: 1px solid #8b5a84; }
  .canvas { position: absolute; left: 0; top: 0; }
  .dir { font: 18.500px "Open Sans", sans-serif; fill: #5f3758; stroke: #b5b1a7; stroke-width: 1.2px; paint-order: stroke; }
  .caption { font: italic 18.700px "Liberation Sans", sans-serif; fill: #1c1f1b; stroke: #aca79c; stroke-width: 1px; paint-order: stroke; }
  .mono { font: 9.500px "Liberation Mono", monospace; fill: #8c8078; white-space: pre; }
  .vbar { width: 15px; margin: 41px 1px 0 0; display: flex; flex-direction: column; height: 788px; position: relative; }
  .vbar b, .hbar b { width: 15px; height: 15px; box-sizing: border-box; border: 1px solid var(--gray); font-size: 7px; line-height: 13px; text-align: center; color: #7f4a79; flex: none; }
  .vbar span { margin: 133px 0 141px; height: 484px; border: 1px solid var(--gray); box-sizing: border-box; }
  .hbar { height: 15px; display: flex; margin: 1px 19px 0 2px; }
  .hbar span { width: 948px; margin-right: auto; border: 1px solid var(--gray); box-sizing: border-box; }
  .pop { position: absolute; left: 1643px; top: 49px; width: 52px; height: 52px; background: var(--paper); box-shadow: 0 2px 8px 2px rgba(130, 125, 115, 0.5); }
  .phead { height: 26px; display: flex; gap: 3px; padding: 3px 0 0 3px; box-sizing: border-box; font-size: 12px; color: #a7a296; }
  .phead em { width: 17px; height: 16px; background: var(--dot) 0 0 / 2px 2px; }
  .pbtn { margin: 0 1px; height: 25px; box-sizing: border-box; border: 1.5px solid var(--ink); outline: 1px solid #a7a296; outline-offset: -3px; background: #eeece8; font-weight: 600; color: #1c1f1b; text-align: center; line-height: 23px; }
  .dock { width: 62px; background: var(--night); position: relative; font-family: "Open Sans", "Noto Sans CJK SC", sans-serif; }
  .date { paint-order: stroke; stroke: #4a4844; stroke-width: 1px; fill: #dedcd5; }
  .glow { position: absolute; left: 0; top: 119px; width: 62px; height: 96px; background: var(--dot) 0 0 / 4px 3px, conic-gradient(from 270deg at 1px 1px, #7b2e77 90deg, transparent 0) 2px 1px / 3px 4px; mask-image: linear-gradient(transparent, #000 25%, #000 65%, transparent); }
  .dock svg { position: relative; }
</style>
